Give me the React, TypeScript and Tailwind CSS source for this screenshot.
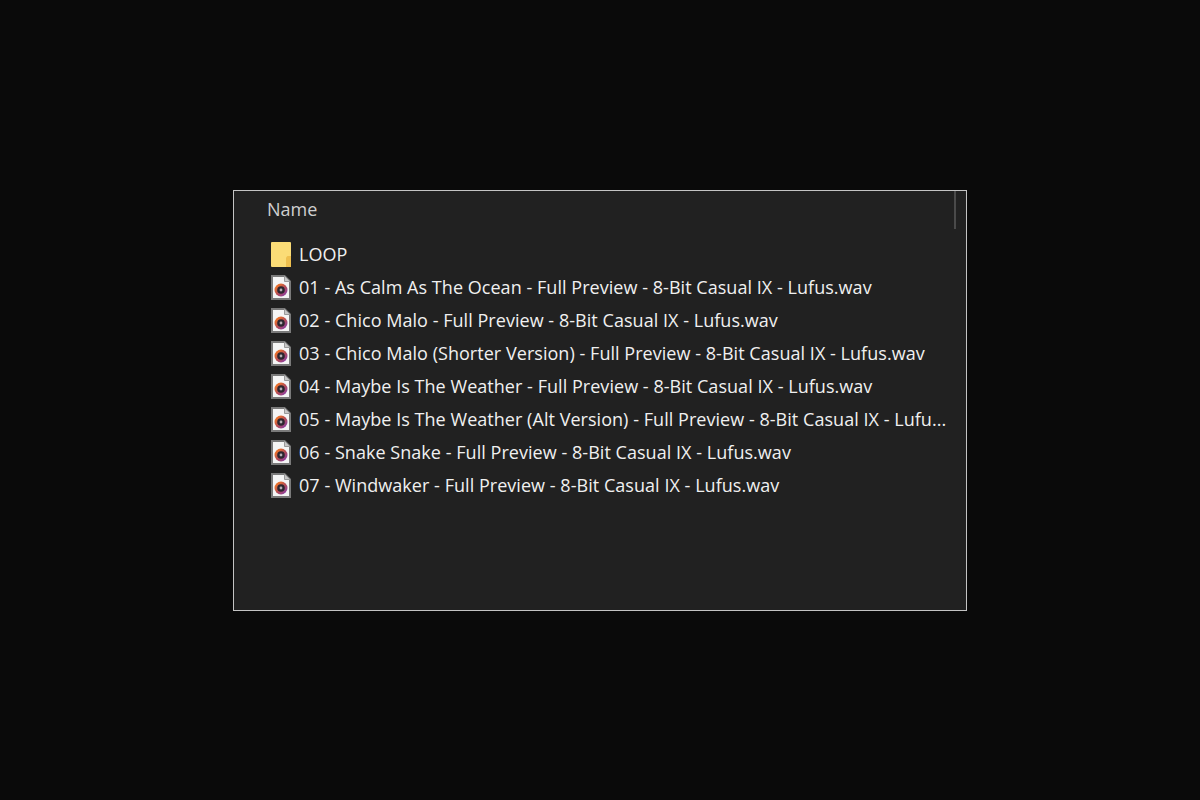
const files = [
  "01 - As Calm As The Ocean - Full Preview - 8-Bit Casual IX - Lufus.wav",
  "02 - Chico Malo - Full Preview - 8-Bit Casual IX - Lufus.wav",
  "03 - Chico Malo (Shorter Version) - Full Preview - 8-Bit Casual IX - Lufus.wav",
  "04 - Maybe Is The Weather - Full Preview - 8-Bit Casual IX - Lufus.wav",
  "05 - Maybe Is The Weather (Alt Version) - Full Preview - 8-Bit Casual IX - Lufu...",
  "06 - Snake Snake - Full Preview - 8-Bit Casual IX - Lufus.wav",
  "07 - Windwaker - Full Preview - 8-Bit Casual IX - Lufus.wav",
];

function FolderIcon() {
  return (
    <svg width="20" height="25" viewBox="0 0 20 25" className="shrink-0">
      <rect x="0" y="0" width="20" height="25" rx="1" fill="#fbdc76" />
      <path d="M15 25V15.5L16.5 14H20V25Z" fill="#eebf4e" />
    </svg>
  );
}

function AudioIcon() {
  return (
    <svg width="20" height="25" viewBox="0 0 20 25" className="shrink-0">
      <defs>
        <linearGradient id="disc" x1="0" y1="0" x2="1" y2="1">
          <stop offset="0.2" stopColor="#e8702c" />
          <stop offset="0.55" stopColor="#b04a5a" />
          <stop offset="0.9" stopColor="#8a3fa8" />
        </linearGradient>
      </defs>
      <path d="M1 1H13.5L19 6.5V24H1Z" fill="#f5f5f5" stroke="#7a7a7a" strokeWidth="2" />
      <path d="M13.5 1V6.5H19" fill="#c8c8c8" stroke="#999999" />
      <circle cx="10" cy="15" r="6.5" fill="url(#disc)" />
      <circle cx="10" cy="15" r="3.8" fill="#2c2630" />
      <circle cx="10" cy="15" r="1.4" fill="#b5b0b4" />
    </svg>
  );
}

export default function App() {
  return (
    <div className="flex h-[800px] w-[1200px] items-center justify-center bg-[#0a0a0a] font-['Open_Sans','Liberation_Sans',sans-serif] text-[#f0f0f0]">
      <div className="h-[421px] w-[734px] border border-[#c4c4c4] bg-[#212121]">
        <div className="flex h-[38px] w-[722px] items-center border-r-2 border-[#4a4a4a] pl-[33px] text-[18px] text-[#cfcfcf]">
          Name
        </div>
        <ul className="mt-[9px] flex flex-col pl-[37px]">
          <li className="flex h-[33px] items-center gap-[8px] text-[18px] tracking-[0.04px]">
            <FolderIcon />
            <span>LOOP</span>
          </li>
          {files.map((name) => (
            <li key={name} className="flex h-[33px] items-center gap-[8px] text-[18px] tracking-[0.04px] whitespace-nowrap">
              <AudioIcon />
              <span>{name}</span>
            </li>
          ))}
        </ul>
      </div>
    </div>
  );
}
